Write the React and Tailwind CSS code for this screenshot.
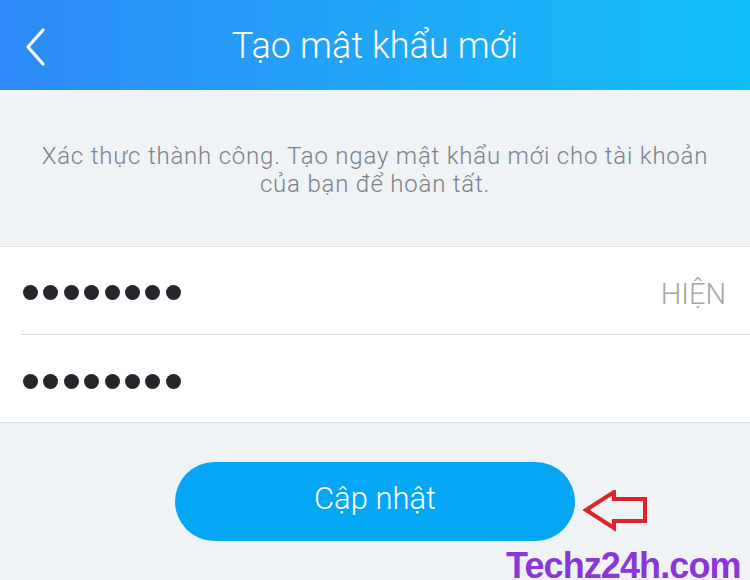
import React from "react";

export default function App() {
  const dots = Array.from({ length: 8 });

  return (
    <div className="w-[750px] h-[580px] bg-[#f0f3f6] overflow-hidden font-['Roboto','Noto_Sans',sans-serif]">
      {/* Header */}
      <header className="h-[90px] flex items-center bg-gradient-to-r from-[#2d8af6] to-[#0fbff8] px-6">
        <svg width="24" height="40" viewBox="0 0 24 40" className="shrink-0 mt-[4px]">
          <path d="M19 3 L4 20 L19 37" fill="none" stroke="white" strokeWidth="3.2" strokeLinecap="round" strokeLinejoin="round" />
        </svg>
        <h1 className="flex-1 text-center text-white text-[36px] font-light tracking-[0.1px] -ml-6 mt-[2px]">
          Tạo mật khẩu mới
        </h1>
      </header>

      {/* Description */}
      <div className="h-[157px] flex justify-center pt-[52px] border-b border-[#dfe2e6]">
        <p className="text-center text-[#7c8189] text-[24px] leading-[28px] font-light tracking-[0.8px] whitespace-nowrap">
          Xác thực thành công. Tạo ngay mật khẩu mới cho tài khoản
          <br />
          của bạn để hoàn tất.
        </p>
      </div>

      {/* Inputs */}
      <div className="bg-white border-b border-[#dfe2e6]">
        <div className="ml-5 h-[88px] flex items-center border-b border-[#dcdcdc] pr-6">
          <div className="flex gap-[5.4px] ml-[3px] mt-[4px]">
            {dots.map((_, i) => (
              <span key={i} className="w-[15px] h-[15px] rounded-full bg-[#24262b]" />
            ))}
          </div>
          <span className="ml-auto text-[#a6a6a6] text-[29px] font-light mt-[8px]">HIỆN</span>
        </div>
        <div className="ml-5 h-[87px] flex items-center">
          <div className="flex gap-[5.4px] ml-[3px] mt-[6px]">
            {dots.map((_, i) => (
              <span key={i} className="w-[15px] h-[15px] rounded-full bg-[#24262b]" />
            ))}
          </div>
        </div>
      </div>

      {/* Button */}
      <div className="relative flex justify-center pt-[39px]">
        <button className="w-[400px] h-[79px] rounded-full bg-[#05a7f4] text-white text-[31px] font-light pb-1">
          Cập nhật
        </button>
        <svg width="66" height="42" viewBox="0 0 66 42" className="absolute left-[583px] top-[67px]">
          <path d="M3 20 L31 2 L31 9 L62 9 L62 31 L31 31 L31 38 Z" fill="none" stroke="#e0222a" strokeWidth="4" strokeLinejoin="miter" />
        </svg>
        <span className="absolute left-[506px] top-[125px] text-[#8a36d8] text-[36px] font-black font-['Liberation_Sans',sans-serif] leading-none tracking-tight">
          Techz24h.com
        </span>
      </div>
    </div>
  );
}
